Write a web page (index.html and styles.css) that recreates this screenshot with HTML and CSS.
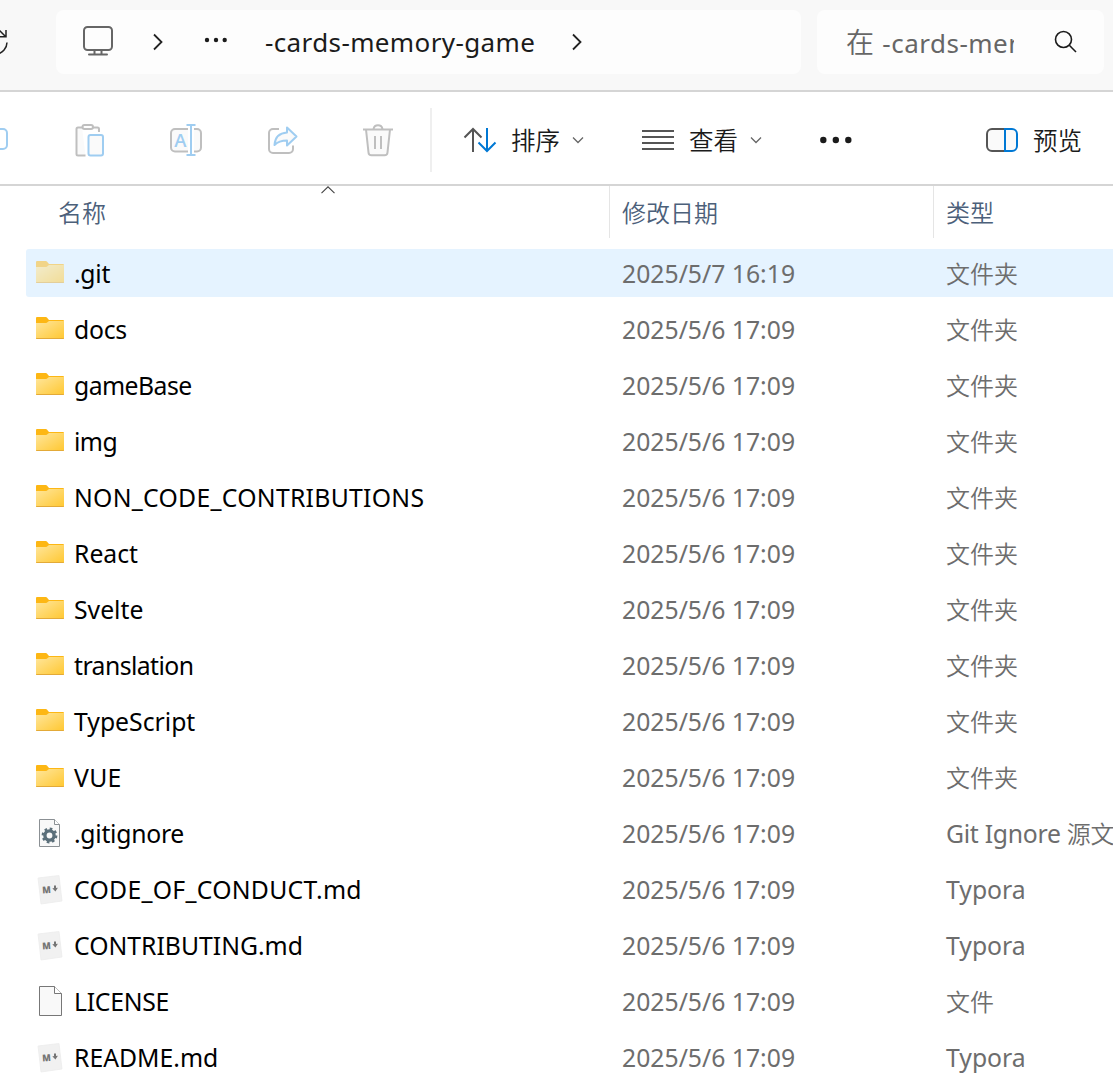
FILE: index.html
```html
<!DOCTYPE html>
<html lang="zh-CN">
<head>
<meta charset="utf-8">
<title>-cards-memory-game</title>
<link rel="stylesheet" href="styles.css">
</head>
<body>
<svg class="defs" width="0" height="0">
  <defs>
    <linearGradient id="folder-front" x1="0" y1="0" x2="1" y2="1">
      <stop offset="0" stop-color="#ffe69c"/><stop offset="1" stop-color="#ffc833"/>
    </linearGradient>
    <symbol id="folder" viewBox="0 0 28 22">
      <path d="M0 1a1 1 0 0 1 1-1h8.500c1 0 1.500.500 2.200 1.500L13 3h14a1 1 0 0 1 1 1v17a1 1 0 0 1-1 1H1a1 1 0 0 1-1-1z" fill="#fdb714"/>
      <path d="M0 6h9.500c1 0 1.500-.300 2.200-1L13 4h15v16.400a.8.8 0 0 1-.8.8H.8a.8.8 0 0 1-.8-.8z" fill="url(#folder-front)"/>
      <path d="M.3 21.500h27.400" stroke="#e3aa38" stroke-width="1"/>
    </symbol>
    <symbol id="markdown" viewBox="0 0 28 32">
      <path d="M2 5L23 2.500L26 28L5 31Z" fill="#f1f1f1" stroke="#ececec" stroke-width=".8"/>
      <text x="6.200" y="20" font-family="Open Sans, sans-serif" font-weight="800" font-size="9.500" textLength="8.500" lengthAdjust="spacingAndGlyphs" fill="#747474" transform="rotate(-4 14 16)">M</text>
      <path d="M19 12.500v3" stroke="#747474" stroke-width="2"/><path d="M16.300 15.200l5.600-.5-2.500 3.700z" fill="#747474"/>
    </symbol>
    <symbol id="chevron" viewBox="0 0 12 8"><path d="M1 1.500L6 6.500L11 1.500" fill="none" stroke="#666" stroke-width="1.300"/></symbol>
    <symbol id="crumb-arrow" viewBox="0 0 12 18"><path d="M2 1.500L9.500 9L2 16.500" fill="none" stroke="#222" stroke-width="1.800"/></symbol>
  </defs>
</svg>

<header class="navbar">
  <svg class="refresh" width="10" height="30" viewBox="0 0 10 30"><path d="M6 3v6.800H-2M-3 6l3-2 6 6M7 15.500A12 12 0 0 1-3 27" fill="none" stroke="#222" stroke-width="1.500"/></svg>
  <nav class="address">
    <svg class="monitor" width="32" height="32" viewBox="0 0 32 32" fill="none" stroke="#666" stroke-width="2"><rect x="2" y="2" width="28" height="23" rx="3.500"/><path d="M12.500 25v4M19.500 25v4M7 29.500h18" stroke-linecap="round"/></svg>
    <svg class="arrow" width="12" height="18"><use href="#crumb-arrow"/></svg>
    <svg class="dots" width="24" height="6" fill="#1b1b1b"><circle cx="3" cy="3" r="2.200"/><circle cx="12" cy="3" r="2.200"/><circle cx="20.700" cy="3" r="2.200"/></svg>
    <span class="crumb">-cards-memory-game</span>
    <svg class="arrow last" width="12" height="18"><use href="#crumb-arrow"/></svg>
  </nav>
  <div class="search">
    <span class="query"><span class="zh">在</span> -cards-memory-game</span>
    <svg width="24" height="24" viewBox="0 0 24 24" fill="none" stroke="#1b1b1b" stroke-width="1.600"><circle cx="9.500" cy="9.500" r="8"/><path d="M15.300 15.300L22 22"/></svg>
  </div>
</header>

<div class="toolbar">
  <svg class="copy" width="10" height="34" viewBox="0 0 10 34" fill="none" stroke="#9fcdf1" stroke-width="2"><path d="M-2 7h5a4 4 0 0 1 4 4v12a4 4 0 0 1-4 4h-5"/></svg>
  <svg class="paste" width="30" height="34" viewBox="0 0 30 34" stroke="#bfbfbf" stroke-width="2"><path d="M24 9V6a1.500 1.500 0 0 0-1.500-1.500H18M7 4.500H3A1.500 1.500 0 0 0 1.500 6v25A1.500 1.500 0 0 0 3 32.500h7.500" fill="#fafafa" /><rect x="7.500" y="2" width="10.500" height="4" rx="2" fill="#fff"/><rect x="13.500" y="12" width="14.500" height="20.500" rx="2" fill="#fafafa" stroke="#9fcdf1"/></svg>
  <svg class="rename" width="34" height="34" viewBox="0 0 34 34" fill="none" stroke="#bfbfbf" stroke-width="2"><path d="M19 6H6a4 4 0 0 0-4 4v14.500a4 4 0 0 0 4 4h13M25 6h3a4 4 0 0 1 4 4v14.500a4 4 0 0 1-4 4h-3" fill="#fafafa"/><path d="M17.500 2h9M17.500 32h9M22 2v30" stroke="#9fcdf1"/><text x="5.300" y="23.500" font-family="Open Sans, sans-serif" font-weight="600" font-size="18.500" fill="#9fcdf1" stroke="none">A</text></svg>
  <svg class="share" width="32" height="34" viewBox="0 0 32 34" fill="none" stroke="#bfbfbf" stroke-width="2"><path d="M12 6H6a4 4 0 0 0-4 4v16a4 4 0 0 0 4 4h16a4 4 0 0 0 4-4v-3.500"/><path d="M20 4.500L29.500 13.500L20 22.500V17.500C14 17.500 10.500 19 7.500 22C8 14.500 12 10 20 9.500Z" fill="#fafafa" stroke="#9fcdf1" stroke-linejoin="round"/></svg>
  <svg class="trash" width="32" height="34" viewBox="0 0 32 34" fill="none" stroke="#bfbfbf" stroke-width="2"><path d="M4 6.500L6.500 29.500a3 3 0 0 0 3 2.800h13a3 3 0 0 0 3-2.800L28 6.500" fill="#fafafa"/><path d="M1 6.500h30M11.500 6a4.600 4.600 0 0 1 9 0M13 13v13M19 13v13"/></svg>
  <i class="divider"></i>
  <svg class="sort" width="34" height="26" viewBox="0 0 34 26" fill="none" stroke="#555" stroke-width="2"><path d="M10 25V2M1.500 10.500L10 2L18.500 10.500"/><path d="M24 1v23M15.500 15.500L24 24L32.500 15.500" stroke="#0078d4"/></svg>
  <span class="label sort-label">排序</span>
  <svg class="caret" width="12" height="8"><use href="#chevron"/></svg>
  <svg class="view" width="32" height="20" viewBox="0 0 32 20" stroke="#555" stroke-width="2"><path d="M0 1h32M0 7h32M0 13h32M0 19h32"/></svg>
  <span class="label view-label">查看</span>
  <svg class="caret" width="12" height="8"><use href="#chevron"/></svg>
  <svg class="more" width="32" height="8" fill="#1b1b1b"><circle cx="3.300" cy="4" r="3.200"/><circle cx="15.800" cy="4" r="3.200"/><circle cx="28.300" cy="4" r="3.200"/></svg>
  <svg class="preview" width="32" height="24" viewBox="0 0 32 24" fill="#fafafa" stroke="#555" stroke-width="2"><path d="M19 1H6a5 5 0 0 0-5 5v12a5 5 0 0 0 5 5h13"/><path d="M19 1h7a5 5 0 0 1 5 5v12a5 5 0 0 1-5 5h-7z" stroke="#0078d4"/></svg>
  <span class="label preview-label">预览</span>
</div>

<div class="columns">
  <span class="head name-head">名称<svg class="sorted" width="14" height="8" viewBox="0 0 14 8"><path d="M.5 7.200L7 .8L13.500 7.200" fill="none" stroke="#444" stroke-width="1.100"/></svg></span>
  <span class="head">修改日期</span>
  <span class="head">类型</span>
</div>

<main class="files">
  <div class="row selected"><svg class="icon folder"><use href="#folder"/></svg><span class="name snug">.git</span><span class="date">2025/5/7 16:19</span><span class="type"><span class="zh">文件夹</span></span></div>
  <div class="row"><svg class="icon folder"><use href="#folder"/></svg><span class="name snug">docs</span><span class="date">2025/5/6 17:09</span><span class="type"><span class="zh">文件夹</span></span></div>
  <div class="row"><svg class="icon folder"><use href="#folder"/></svg><span class="name tight">gameBase</span><span class="date">2025/5/6 17:09</span><span class="type"><span class="zh">文件夹</span></span></div>
  <div class="row"><svg class="icon folder"><use href="#folder"/></svg><span class="name tight">img</span><span class="date">2025/5/6 17:09</span><span class="type"><span class="zh">文件夹</span></span></div>
  <div class="row"><svg class="icon folder"><use href="#folder"/></svg><span class="name loose">NON_CODE_CONTRIBUTIONS</span><span class="date">2025/5/6 17:09</span><span class="type"><span class="zh">文件夹</span></span></div>
  <div class="row"><svg class="icon folder"><use href="#folder"/></svg><span class="name">React</span><span class="date">2025/5/6 17:09</span><span class="type"><span class="zh">文件夹</span></span></div>
  <div class="row"><svg class="icon folder"><use href="#folder"/></svg><span class="name">Svelte</span><span class="date">2025/5/6 17:09</span><span class="type"><span class="zh">文件夹</span></span></div>
  <div class="row"><svg class="icon folder"><use href="#folder"/></svg><span class="name tight">translation</span><span class="date">2025/5/6 17:09</span><span class="type"><span class="zh">文件夹</span></span></div>
  <div class="row"><svg class="icon folder"><use href="#folder"/></svg><span class="name">TypeScript</span><span class="date">2025/5/6 17:09</span><span class="type"><span class="zh">文件夹</span></span></div>
  <div class="row"><svg class="icon folder"><use href="#folder"/></svg><span class="name loose">VUE</span><span class="date">2025/5/6 17:09</span><span class="type"><span class="zh">文件夹</span></span></div>
  <div class="row"><svg class="icon" viewBox="0 0 28 32"><path d="M3.500 2.500h15l5 5v22h-20z" fill="#f8f8f8" stroke="#8b9094"/><path d="M18.500 2.500v5h5" fill="#fff" stroke="#8b9094"/><circle cx="13.500" cy="18.500" r="4.600" fill="none" stroke="#5b6f7a" stroke-width="3.400"/><circle cx="13.500" cy="18.500" r="6.800" fill="none" stroke="#5b6f7a" stroke-width="2.200" stroke-dasharray="2.670 2.670"/></svg><span class="name snug">.gitignore</span><span class="date">2025/5/6 17:09</span><span class="type snug">Git Ignore <span class="zh">源文件</span></span></div>
  <div class="row"><svg class="icon"><use href="#markdown"/></svg><span class="name loose">CODE_OF_CONDUCT.md</span><span class="date">2025/5/6 17:09</span><span class="type">Typora</span></div>
  <div class="row"><svg class="icon"><use href="#markdown"/></svg><span class="name">CONTRIBUTING.md</span><span class="date">2025/5/6 17:09</span><span class="type">Typora</span></div>
  <div class="row"><svg class="icon" viewBox="0 0 28 32"><path d="M3.500 1.500h15l7 7v22h-22z" fill="#f9f9f9" stroke="#777"/><path d="M18.500 1.500v7h7" fill="#fff" stroke="#777"/></svg><span class="name snug">LICENSE</span><span class="date">2025/5/6 17:09</span><span class="type"><span class="zh">文件</span></span></div>
  <div class="row"><svg class="icon"><use href="#markdown"/></svg><span class="name">README.md</span><span class="date">2025/5/6 17:09</span><span class="type">Typora</span></div>
</main>
</body>
</html>
```
FILE: styles.css
```css
* { box-sizing: border-box; }
body {
  margin: 0;
  width: 1113px;
  height: 1084px;
  overflow: hidden;
  background: #fff;
  color: #000;
  font-family: "Noto Sans", "Noto Sans CJK SC", sans-serif;
  font-size: 24.75px;
  white-space: nowrap;
}
svg { display: block; flex: none; }
.defs { position: absolute; }
.zh, .label, .head { font-family: "Noto Sans CJK SC", sans-serif; font-size: 24px; font-weight: 350; }

.navbar {
  display: flex;
  height: 92px;
  padding: 10px 9px 16px 0;
  background: #f8f8f8;
  border-bottom: 2px solid #d5d5d5;
}
.refresh { margin: 17px 46px 0 0; }
.address, .search { display: flex; align-items: center; height: 64px; background: #fdfdfd; border-radius: 8px; }
.address { width: 745px; padding-left: 26px; color: #1b1b1b; }
.monitor { margin-top: -2px; }
.arrow { margin-left: 38px; }
.dots { margin: -4px 37px 0 40px; }
.crumb { width: 270px; font-size: 26px; line-height: 36px; letter-spacing: .38px; }
.arrow.last { margin-left: 36px; }
.search { width: 287px; margin-left: 16px; padding-left: 29px; color: #666; }
.query { width: 168px; margin-right: 40px; padding-top: 2px; overflow: hidden; font-size: 26px; line-height: 40px; letter-spacing: .5px; }
.query .zh { font-size: 28px; line-height: 36px; letter-spacing: 1px; }

.toolbar {
  display: flex;
  align-items: center;
  height: 94px;
  border-bottom: 2px solid #d5d5d5;
}
.label { width: 49px; padding-top: 4px; font-size: 24.5px; line-height: 36px; color: #1b1b1b; }
.copy { margin-top: 1px; }
.paste { margin: 4px 0 0 65px; }
.rename { margin: 4px 0 0 64px; }
.share { margin: 4px 0 0 64px; }
.trash { margin: 4px 0 0 63px; }
.divider { width: 2px; height: 64px; margin: 4px 0 0 36px; background: #efefef; }
.sort { margin: 4px 0 0 31px; }
.sort-label { margin-left: 14px; }
.caret { margin: 4px 0 0 12px; }
.view { margin: 4px 0 0 58px; }
.view-label { margin-left: 15px; }
.more { margin: 4px 0 0 58px; }
.preview { margin: 4px 0 0 134px; }
.preview-label { margin-left: 15px; }

.columns { display: grid; grid-template-columns: 610px 324px 1fr; height: 63px; }
.head { position: relative; height: 52px; padding: 8px 0 0 12px; line-height: 36px; color: #4c607a; border-right: 1px solid #e5e5e5; }
.head:last-child { border-right: 0; }
.name-head { padding-left: 58px; }
.sorted { position: absolute; left: 321px; top: 0; }

.files { display: grid; row-gap: 8px; padding-left: 26px; }
.row {
  display: grid;
  grid-template-columns: 28px 548px 324px 1fr;
  align-items: center;
  height: 48px;
  padding-left: 10px;
  line-height: 36px;
}
.row > span { padding: 2px 0 0 10px; }
.date, .type { color: #6d6d6d; }
.type .zh { line-height: 34px; }
.loose { letter-spacing: .28px; }
.snug { letter-spacing: -.27px; }
.tight { letter-spacing: -.55px; }
.icon { width: 28px; height: 32px; }
.icon.folder { height: 22px; margin-top: -2px; }
.selected { background: #e5f3ff; border-radius: 3px 0 0 3px; }
.selected .icon { opacity: .5; }
```
